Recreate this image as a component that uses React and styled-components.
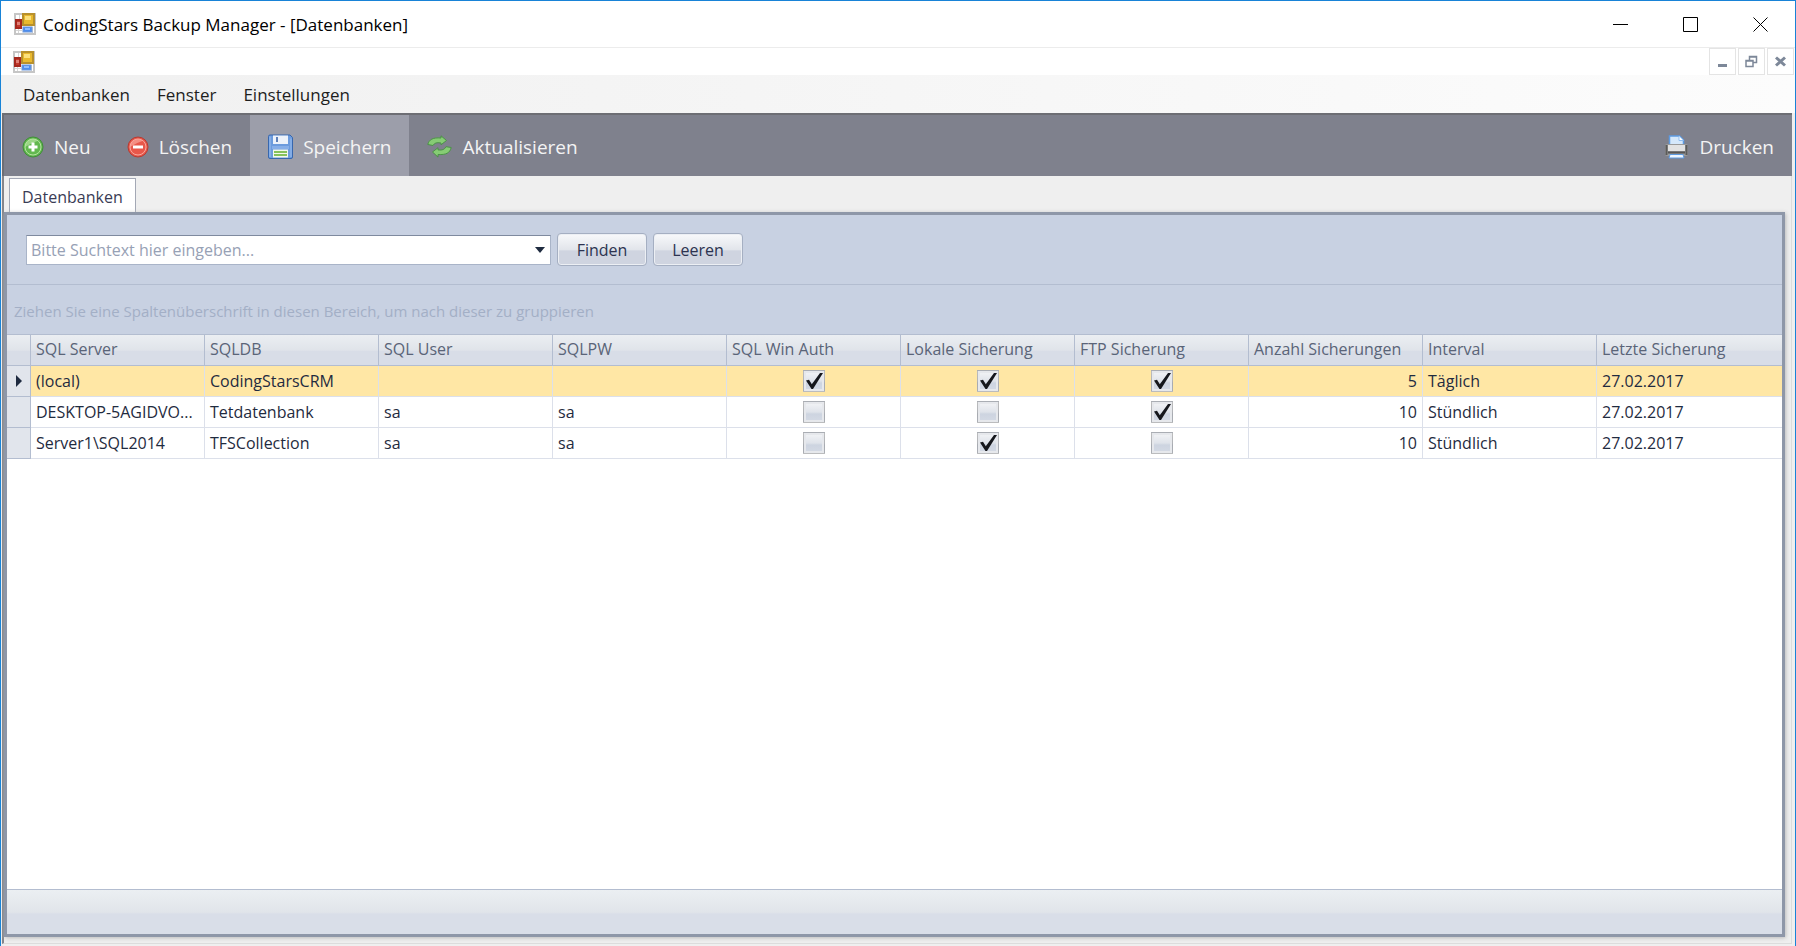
import React, { useState } from 'react';
import styled, { createGlobalStyle } from 'styled-components';

const ACCENT = '#1883d7';
const TOOLBAR = '#7f818d';
const TOOLBAR_ACTIVE = '#9c9eaa';
const PANEL = '#c8d1e2';
const PANEL_LINE = '#b3bdd0';
const FRAME = '#8e97a8';
const CELL_LINE = '#dce0ea';
const FONT_DARK = '#1f2b40';
const FONT_HEADER = '#5a6478';

const GlobalStyle = createGlobalStyle`
    * {
        box-sizing: border-box;
    }

    body {
        margin: 0;
        font-family: 'Open Sans', 'Noto Sans', sans-serif;
        font-size: 16px;
        color: ${FONT_DARK};
    }

    button, input {
        font: inherit;
        color: inherit;
    }
`;

const Window = styled.div`
    display: flex;
    flex-direction: column;
    min-height: 100vh;
    background: #efefef;
    border: 1px solid ${ACCENT};
    border-bottom: 0;
`;

const TitleBar = styled.header`
    display: flex;
    align-items: center;
    height: 47px;
    padding-left: 13px;
    gap: 7px;
    background: #fff;
    border-bottom: 1px solid #ececec;
`;

const Title = styled.h1`
    flex: 1;
    margin: 0;
    font-size: 17px;
    font-weight: 400;
    color: #000;
`;

const CaptionButtons = styled.div`
    display: flex;
`;

const CaptionButton = styled.button`
    display: flex;
    align-items: center;
    justify-content: center;
    width: 70px;
    height: 46px;
    padding: 0;
    border: 0;
    background: none;
`;

const MdiBar = styled.div`
    display: flex;
    align-items: center;
    justify-content: space-between;
    height: 27px;
    padding: 0 1px 0 12px;
    background: #fff;
`;

const MdiButtons = styled.div`
    display: flex;
    gap: 2px;
`;

const MdiButton = styled.button`
    display: flex;
    align-items: center;
    justify-content: center;
    width: 27px;
    height: 27px;
    padding: 0;
    border: 1px solid #e4e4e4;
    background: #fff;
`;

const MenuBar = styled.nav`
    display: flex;
    align-items: center;
    gap: 27px;
    height: 38px;
    padding-left: 22px;
    background: linear-gradient(90deg, #f0f0f0, #fcfcfc);
`;

const MenuLink = styled.a`
    font-size: 17px;
    color: #1e1e1e;
    text-decoration: none;
`;

const Toolbar = styled.div`
    display: flex;
    height: 63px;
    margin: 0 3px 0 1px;
    background: ${TOOLBAR};
    border-top: 2px solid #6d6e74;
    border-left: 2px solid #6d6e74;
`;

const ToolButton = styled.button`
    display: flex;
    align-items: center;
    gap: 10px;
    margin-left: ${props => (props.$right ? 'auto' : '0')};
    padding: 2px 18px 0;
    border: 0;
    background: ${props => (props.$active ? TOOLBAR_ACTIVE : 'none')};
    font-size: 19px;
    color: #f4f4f4;
`;

const Client = styled.main`
    display: flex;
    flex-direction: column;
    flex: 1;
    margin: 0 3px 2px 1px;
    padding-bottom: 6px;
    border-left: 2px solid #85868c;
    border-right: 1px solid #dcdcdc;
    border-bottom: 1px solid #dcdcdc;
`;

const TabStrip = styled.div`
    display: flex;
    align-items: flex-end;
    height: 36px;
    padding-left: 5px;
`;

const Tab = styled.button`
    height: 34px;
    padding: 2px 12px 0;
    border: 1px solid #a3a8b5;
    border-bottom: 0;
    background: #fff;
    color: #3a3c55;
`;

const Panel = styled.section`
    display: flex;
    flex-direction: column;
    flex: 1;
    margin-right: 6px;
    border: 3px solid ${FRAME};
    box-shadow: 1px 1px 4px #bbb;
    background: #fff;
`;

const SearchBar = styled.form`
    display: flex;
    align-items: center;
    gap: 6px;
    height: 70px;
    padding-left: 19px;
    background: ${PANEL};
    border-bottom: 1px solid ${PANEL_LINE};
`;

const Combo = styled.div`
    display: flex;
    width: 525px;
    height: 30px;
    background: #fff;
    border: 1px solid #a9b4c8;
    border-top-color: #7f8a9f;
`;

const ComboInput = styled.input`
    flex: 1;
    min-width: 0;
    padding: 0 4px;
    border: 0;
    outline: 0;
    background: none;

    &::placeholder {
        color: #97a1b5;
        opacity: 1;
    }
`;

const ComboArrow = styled.button`
    display: flex;
    align-items: center;
    justify-content: center;
    width: 20px;
    padding: 0;
    border: 0;
    background: none;
`;

const PushButton = styled.button`
    width: 90px;
    height: 33px;
    padding: 0;
    border: 1px solid #a5afc2;
    border-radius: 4px;
    background: linear-gradient(#f8f9fb, #e2e5eb 50%, #cfd4e0 55%, #cfd4e0);
    box-shadow: inset 0 0 0 1px #eceff4;
    color: #2c3350;
`;

const GroupHint = styled.div`
    height: 50px;
    padding: 2px 0 0 7px;
    line-height: 48px;
    background: ${PANEL};
    border-bottom: 1px solid ${PANEL_LINE};
    font-size: 15px;
    color: #a3afc6;
`;

const GridArea = styled.div`
    flex: 1;
`;

const Grid = styled.table`
    width: 100%;
    table-layout: fixed;
    border-collapse: separate;
    border-spacing: 0;
`;

const Col = styled.col`
    width: ${props => props.$width};
`;

const HeadCell = styled.th`
    height: 31px;
    padding: 0 5px 2px;
    border-right: 1px solid ${PANEL_LINE};
    border-bottom: 1px solid ${PANEL_LINE};
    background: linear-gradient(#ebeef2, #e0e4ea 50%, #d8dde7 55%, #d8dde7);
    font-weight: 400;
    line-height: 20px;
    text-align: left;
    white-space: nowrap;
    color: ${FONT_HEADER};

    &:last-child {
        border-right: 0;
    }
`;

const Row = styled.tr`
    background: ${props => (props.$selected ? '#ffe7a5' : '#fff')};
`;

const Cell = styled.td`
    height: 31px;
    padding: 0 5px;
    border-right: 1px solid ${CELL_LINE};
    border-bottom: 1px solid ${CELL_LINE};
    overflow: hidden;
    line-height: 20px;
    text-align: ${props => props.$align || 'left'};
    text-overflow: ellipsis;
    white-space: nowrap;

    &:last-child {
        border-right: 0;
    }
`;

const Indicator = styled.td`
    padding: 0;
    border-right: 1px solid ${PANEL_LINE};
    border-bottom: 1px solid ${PANEL_LINE};
    background: #e1e5ec;
    line-height: 0;
    text-align: center;
`;

const CheckLabel = styled.label`
    display: inline-grid;
    vertical-align: top;

    > * {
        grid-area: 1 / 1;
    }

    > svg {
        pointer-events: none;
    }
`;

const CheckInput = styled.input`
    appearance: none;
    width: 22px;
    height: 22px;
    margin: 0;
    border: 1px solid rgba(120, 120, 120, 0.45);
    background: linear-gradient(#f4f5f7, #dfe3ea 50%, #cdd4e0 60%, #d4dae5);
    box-shadow: inset 0 0 0 2px #e6e8ec;
`;

const Footer = styled.footer`
    height: 45px;
    background: linear-gradient(#ebeff2, #e1e5ea 50%, #d9dee8 55%, #d9dee8);
    border-top: 1px solid ${PANEL_LINE};
`;

const AppIcon = () => (
    <svg width="22" height="22" viewBox="0 0 22 22">
        <rect x="1" y="1" width="20" height="20" fill="#fff" stroke="#c6c6c6" strokeWidth="2"/>
        <path d="M5.5 2v4M4.500 16v4M2 17.500h6M18.500 14v6" stroke="#d6d6d6"/>
        <rect x="9" y="1" width="11" height="11" fill="#e9b92e" stroke="#b8902c" strokeWidth="2"/>
        <rect x="11" y="3" width="6" height="4" fill="#fbe07c"/>
        <rect x="2" y="7" width="5" height="8" fill="#c2382c" stroke="#a5281e" strokeWidth="2"/>
        <rect x="3" y="9" width="3" height="3" fill="#e08076"/>
        <rect x="9" y="14" width="9" height="5" fill="#4c8df0" stroke="#6e98d8"/>
        <rect x="11" y="15" width="5" height="2" fill="#8fbcff"/>
    </svg>
);

const RoundIcon = ({ light, mid, dark, plus }) => (
    <svg width="22" height="22" viewBox="0 0 22 22">
        <circle cx="11" cy="11" r="10" fill={mid} stroke={dark}/>
        <path d="M3 11a8 8 0 0 1 13-6.200Q9 7 3 11z" fill={light} opacity="0.7"/>
        <circle cx="11" cy="11" r="8" fill="none" stroke={light}/>
        <path d={plus ? 'M11 6.500v9M6.500 11h9' : 'M6 11h10'} stroke="#fff" strokeWidth="3"/>
    </svg>
);

const SaveIcon = () => (
    <svg width="25" height="25" viewBox="0 0 25 25">
        <path d="M2 1h20l2.500 2.500V23a1.500 1.500 0 0 1-1.500 1.500H2A1.500 1.500 0 0 1 .5 23V2.500A1.500 1.500 0 0 1 2 1z" fill="#6c9bdd" stroke="#3767ae"/>
        <path d="M2 2.500v20.500M23 4.500v18.500" stroke="#9dbfee"/>
        <rect x="5" y="1.500" width="15" height="8.500" fill="#edf2fa"/>
        <rect x="8" y="3" width="2" height="5" fill="#5d7fb8"/>
        <rect x="4" y="12" width="17" height="3" fill="#86aee8"/>
        <rect x="5" y="15.500" width="15" height="8" fill="#f3f8ec"/>
        <path d="M6 18h13M6 21h13" stroke="#86c25c" strokeWidth="2"/>
    </svg>
);

const RefreshIcon = () => (
    <svg width="25" height="23" viewBox="0 0 25 23" stroke="#4c9248" strokeLinejoin="round">
        <path d="M.8 9.500C2 4.500 6 2.300 14 3V.8l5.500 4.700-5.500 4.300V8C9.500 7.200 7.500 8 6 10.500z" fill="#86cc74"/>
        <path d="M24.200 12.500c-1.200 5.500-5.200 7.500-13.200 7v2.600L5.500 17l5.500-4.300v2.200c4.500.6 6.500-.4 8-3.200z" fill="#86cc74"/>
    </svg>
);

const PrintIcon = () => (
    <svg width="25" height="24" viewBox="0 0 25 24">
        <path d="M5.500 12V1h10l4 4v7z" fill="#d5e8fb" stroke="#5d9be2" strokeWidth="1.500"/>
        <path d="M15 1v4.500h4.500" fill="#fff" stroke="#8fbdf0"/>
        <rect x="1" y="9" width="23" height="12" rx="2" fill="#9a9a9a"/>
        <rect x="4" y="10" width="17" height="6" fill="#e2e2e2"/>
        <path d="M2.500 10v10M22.500 10v10" stroke="#5a5a5a" strokeWidth="2"/>
        <path d="M4 17.500h17" stroke="#555" strokeWidth="2"/>
        <path d="M6 19.500h13l1 3.500H5z" fill="#eef6ff" stroke="#5d9be2"/>
    </svg>
);

const CheckMark = () => (
    <svg width="22" height="22" viewBox="0 0 22 22">
        <path d="M3 10.500l3-.7 2.800 4.400L17 3h3L10 19H8.500z" fill="#15171c"/>
    </svg>
);

const captions = [
    { label: 'Minimieren', path: 'M0 7.500h15' },
    { label: 'Maximieren', path: 'M.5 .5h14v14h-14z' },
    { label: 'Beenden', path: 'M.5 .5l14 14M14.500 .5l-14 14' }
];

const mdiButtons = [
    { label: 'Fenster minimieren', path: 'M2 10.500h9', width: 3 },
    { label: 'Fenster wiederherstellen', path: 'M1 5.500h7v6h-7zM4.500 5V1.500h7v6H8.500M1 6h7M4 2h8', width: 1.5 },
    { label: 'Fenster schließen', path: 'M2 2.500l9 8M11 2.500l-9 8', width: 3 }
];

const columns = [
    { key: 'server', title: 'SQL Server' },
    { key: 'db', title: 'SQLDB' },
    { key: 'user', title: 'SQL User' },
    { key: 'password', title: 'SQLPW' },
    { key: 'winAuth', title: 'SQL Win Auth', check: true },
    { key: 'local', title: 'Lokale Sicherung', check: true },
    { key: 'ftp', title: 'FTP Sicherung', check: true },
    { key: 'count', title: 'Anzahl Sicherungen', align: 'right' },
    { key: 'interval', title: 'Interval' },
    { key: 'last', title: 'Letzte Sicherung' }
];

const initialRows = [
    { server: '(local)', db: 'CodingStarsCRM', user: '', password: '', winAuth: true, local: true, ftp: true, count: 5, interval: 'Täglich', last: '27.02.2017' },
    { server: 'DESKTOP-5AGIDVO...', db: 'Tetdatenbank', user: 'sa', password: 'sa', winAuth: false, local: false, ftp: true, count: 10, interval: 'Stündlich', last: '27.02.2017' },
    { server: 'Server1\\SQL2014', db: 'TFSCollection', user: 'sa', password: 'sa', winAuth: false, local: true, ftp: false, count: 10, interval: 'Stündlich', last: '27.02.2017' }
];

const CheckBox = ({ label, checked, onChange }) => (
    <CheckLabel>
        <CheckInput type="checkbox" aria-label={label} checked={checked} onChange={onChange}/>
        {checked && <CheckMark/>}
    </CheckLabel>
);

const DatabaseGrid = () => {
    const [rows, setRows] = useState(initialRows);
    const [selected, setSelected] = useState(0);

    const toggle = (index, key) => {
        setRows(rows.map((row, i) => (i === index ? { ...row, [key]: !row[key] } : row)));
    };

    return (
        <Grid>
            <colgroup>
                <Col $width="24px"/>
                {columns.map((column, i) => (
                    <Col key={column.key} $width={i < columns.length - 1 ? '174px' : 'auto'}/>
                ))}
            </colgroup>
            <thead>
                <tr>
                    <HeadCell/>
                    {columns.map(column => (
                        <HeadCell key={column.key} scope="col">{column.title}</HeadCell>
                    ))}
                </tr>
            </thead>
            <tbody>
                {rows.map((row, i) => (
                    <Row key={row.server} $selected={i === selected} onClick={() => setSelected(i)}>
                        <Indicator>
                            {i === selected && (
                                <svg width="6" height="12" viewBox="0 0 6 12">
                                    <path d="M0 0l6 6-6 6z" fill={FONT_DARK}/>
                                </svg>
                            )}
                        </Indicator>
                        {columns.map(column => (
                            <Cell key={column.key} $align={column.check ? 'center' : column.align}>
                                {column.check
                                    ? <CheckBox label={column.title} checked={row[column.key]} onChange={() => toggle(i, column.key)}/>
                                    : row[column.key]}
                            </Cell>
                        ))}
                    </Row>
                ))}
            </tbody>
        </Grid>
    );
};

const App = () => {
    const [search, setSearch] = useState('');

    return (
        <Window>
            <GlobalStyle/>
            <TitleBar>
                <AppIcon/>
                <Title>CodingStars Backup Manager - [Datenbanken]</Title>
                <CaptionButtons>
                    {captions.map(caption => (
                        <CaptionButton key={caption.label} aria-label={caption.label}>
                            <svg width="15" height="15" viewBox="0 0 15 15" fill="none" stroke="#000">
                                <path d={caption.path}/>
                            </svg>
                        </CaptionButton>
                    ))}
                </CaptionButtons>
            </TitleBar>
            <MdiBar>
                <AppIcon/>
                <MdiButtons>
                    {mdiButtons.map(button => (
                        <MdiButton key={button.label} aria-label={button.label}>
                            <svg width="13" height="13" viewBox="0 0 13 13" fill="none" stroke="#7d8899" strokeWidth={button.width}>
                                <path d={button.path}/>
                            </svg>
                        </MdiButton>
                    ))}
                </MdiButtons>
            </MdiBar>
            <MenuBar>
                <MenuLink href="#datenbanken">Datenbanken</MenuLink>
                <MenuLink href="#fenster">Fenster</MenuLink>
                <MenuLink href="#einstellungen">Einstellungen</MenuLink>
            </MenuBar>
            <Toolbar>
                <ToolButton><RoundIcon plus light="#b5e3a0" mid="#62b84f" dark="#3f8f37"/>Neu</ToolButton>
                <ToolButton><RoundIcon light="#f9a79c" mid="#e8574a" dark="#b93a30"/>Löschen</ToolButton>
                <ToolButton $active><SaveIcon/>Speichern</ToolButton>
                <ToolButton><RefreshIcon/>Aktualisieren</ToolButton>
                <ToolButton $right><PrintIcon/>Drucken</ToolButton>
            </Toolbar>
            <Client>
                <TabStrip role="tablist">
                    <Tab role="tab" aria-selected="true">Datenbanken</Tab>
                </TabStrip>
                <Panel>
                    <SearchBar onSubmit={event => event.preventDefault()}>
                        <Combo>
                            <ComboInput
                                aria-label="Suchtext"
                                placeholder="Bitte Suchtext hier eingeben..."
                                value={search}
                                onChange={event => setSearch(event.target.value)}
                            />
                            <ComboArrow type="button" aria-label="Suchverlauf">
                                <svg width="10" height="6" viewBox="0 0 10 6">
                                    <path d="M0 0h10L5 6z" fill={FONT_DARK}/>
                                </svg>
                            </ComboArrow>
                        </Combo>
                        <PushButton type="submit">Finden</PushButton>
                        <PushButton type="button" onClick={() => setSearch('')}>Leeren</PushButton>
                    </SearchBar>
                    <GroupHint>Ziehen Sie eine Spaltenüberschrift in diesen Bereich, um nach dieser zu gruppieren</GroupHint>
                    <GridArea>
                        <DatabaseGrid/>
                    </GridArea>
                    <Footer/>
                </Panel>
            </Client>
        </Window>
    );
};

export default App;
